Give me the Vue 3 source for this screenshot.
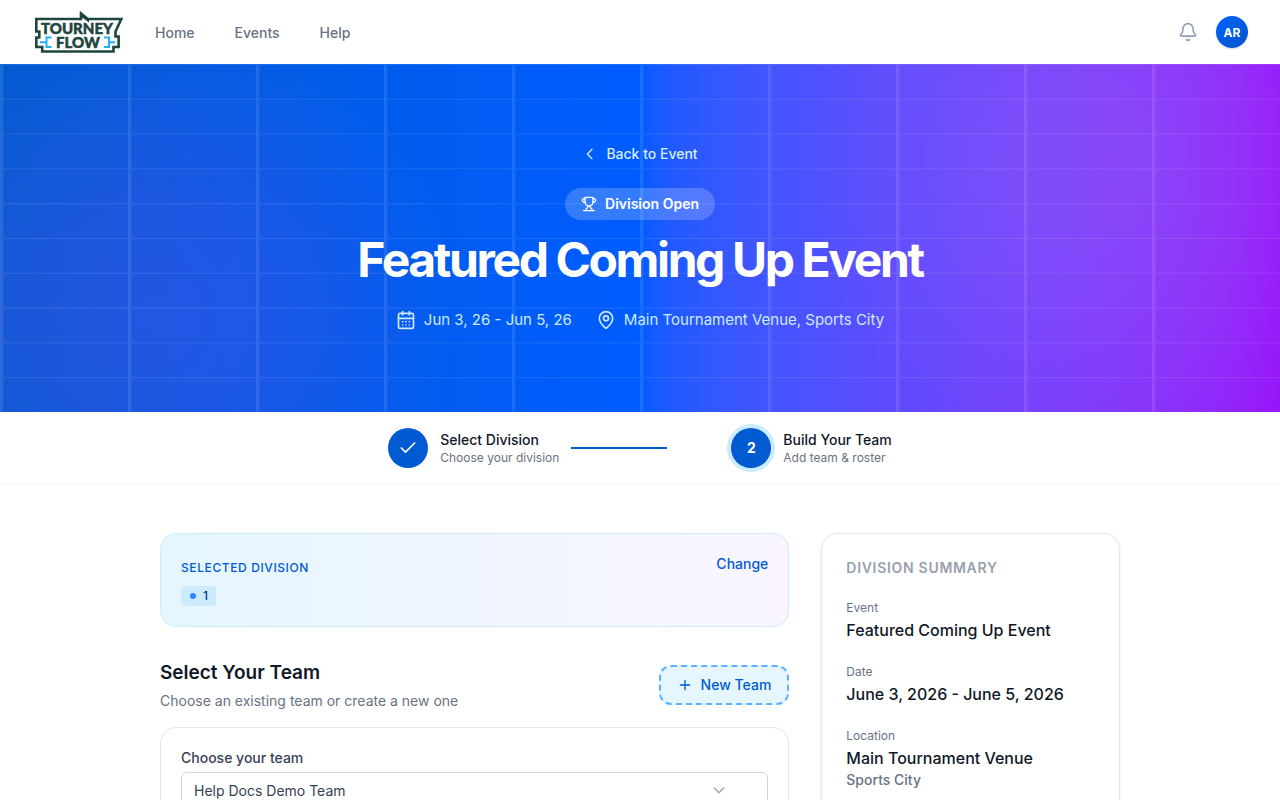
<template>
  <div class="page">
    <header class="topbar">
      <div class="topbar-left">
        <a href="#" class="logo" aria-label="Tourney Flow">
          <svg viewBox="34 10 91 44" width="91" height="44">
            <path
              class="logo-frame"
              d="M36.3 19H81V14L87.5 19H121.3L115.5 31.5V36.5H118.6V47H113.5V51.5H42.2V47H36.3V37.5H39.3V31.5H36.3Z"
            />
            <path class="logo-bolt" d="M80 11L89 18.5V22.5L80 16Z" />
            <path class="logo-bracket" d="M40 42.3H46.5M51.5 37.6H46.5V47H51.5" />
            <path class="logo-bracket" d="M115 42.3H109M104 37.6H109V47H104" />
            <text x="77" y="34" text-anchor="middle">TOURNEY</text>
            <text x="78" y="48" text-anchor="middle">FLOW</text>
          </svg>
        </a>
        <nav class="nav">
          <a v-for="link in links" :key="link" href="#">{{ link }}</a>
        </nav>
      </div>
      <div class="topbar-right">
        <button class="bell" type="button" aria-label="Notifications">
          <svg class="icon" viewBox="0 0 24 24" width="20" height="20">
            <path d="M10.268 21a2 2 0 0 0 3.464 0" />
            <path d="M3.262 15.326A1 1 0 0 0 4 17h16a1 1 0 0 0 .74-1.673C19.41 13.956 18 12.499 18 8A6 6 0 0 0 6 8c0 4.499-1.411 5.956-2.738 7.326" />
          </svg>
        </button>
        <button class="avatar" type="button">AR</button>
      </div>
    </header>

    <section class="hero">
      <svg class="hero-grid" viewBox="0 0 100 100" preserveAspectRatio="none" aria-hidden="true">
        <defs>
          <pattern id="grid" width="10" height="10" patternUnits="userSpaceOnUse">
            <path d="M 10 0 L 0 0 0 10" fill="none" stroke="white" stroke-width="0.5" />
          </pattern>
        </defs>
        <rect width="100" height="100" fill="url(#grid)" />
      </svg>
      <div class="hero-content">
        <a href="#" class="back-link">
          <svg class="icon" viewBox="0 0 24 24" width="16" height="16"><path d="m15 19-7-7 7-7" /></svg>
          Back to Event
        </a>
        <div class="hero-badge">
          <svg class="icon" viewBox="0 0 24 24" width="16" height="16">
            <path d="M6 9H4.5a2.5 2.5 0 0 1 0-5H6M18 9h1.5a2.5 2.5 0 0 0 0-5H18M4 22h16" />
            <path d="M10 14.66V17c0 .55-.47.98-.97 1.21C7.85 18.75 7 20.24 7 22" />
            <path d="M14 14.66V17c0 .55.47.98.97 1.21C16.15 18.75 17 20.24 17 22" />
            <path d="M18 2H6v7a6 6 0 0 0 12 0V2Z" />
          </svg>
          Division Open
        </div>
        <h1>{{ event.name }}</h1>
        <div class="hero-meta">
          <span>
            <svg class="icon" viewBox="0 0 24 24" width="20" height="20">
              <path d="M8 2v4M16 2v4M3 10h18" />
              <rect width="18" height="18" x="3" y="4" rx="2" />
              <path d="M8 14h.01M12 14h.01M16 14h.01M8 18h.01M12 18h.01M16 18h.01" />
            </svg>
            Jun 3, 26 - Jun 5, 26
          </span>
          <span>
            <svg class="icon" viewBox="0 0 24 24" width="20" height="20">
              <path d="M20 10c0 4.993-5.539 10.193-7.399 11.799a1 1 0 0 1-1.202 0C9.539 20.193 4 14.993 4 10a8 8 0 0 1 16 0" />
              <circle cx="12" cy="10" r="3" />
            </svg>
            {{ event.venue }}, {{ event.city }}
          </span>
        </div>
      </div>
    </section>

    <ol class="steps">
      <li class="step">
        <span class="step-circle">
          <svg class="icon" viewBox="0 0 24 24" width="20" height="20"><path d="M20 6 9 17l-5-5" /></svg>
        </span>
        <div>
          <p class="step-title">Select Division</p>
          <p class="step-text">Choose your division</p>
        </div>
        <span class="step-line"></span>
      </li>
      <li class="step">
        <span class="step-circle active">2</span>
        <div>
          <p class="step-title">Build Your Team</p>
          <p class="step-text">Add team &amp; roster</p>
        </div>
      </li>
    </ol>

    <main class="content">
      <div class="main-column">
        <section class="division-card">
          <div>
            <p class="division-label"><span>Selected Division</span></p>
            <span class="division-badge"><i class="dot"></i>1</span>
          </div>
          <button class="change-button" type="button">Change</button>
        </section>

        <div class="team-header">
          <div>
            <h2>Select Your Team</h2>
            <p>Choose an existing team or create a new one</p>
          </div>
          <button class="new-team" type="button">
            <svg class="icon" viewBox="0 0 24 24" width="16" height="16"><path d="M5 12h14M12 5v14" /></svg>
            New Team
          </button>
        </div>

        <section class="team-card">
          <label for="team">Choose your team</label>
          <div class="select-wrapper">
            <select id="team" v-model="team">
              <option v-for="name in teams" :key="name" :value="name">{{ name }}</option>
            </select>
            <svg class="icon select-arrow" viewBox="0 0 24 24" width="16" height="16"><path d="m5 9 7 7 7-7" /></svg>
          </div>
        </section>
      </div>

      <aside class="summary">
        <h3>Division Summary</h3>
        <dl>
          <div v-for="row in summary" :key="row.label">
            <dt>{{ row.label }}</dt>
            <dd>{{ row.value }}</dd>
            <dd v-if="row.note" class="note">{{ row.note }}</dd>
          </div>
        </dl>
      </aside>
    </main>
  </div>
</template>

<script setup>
import { ref } from 'vue'

const links = ['Home', 'Events', 'Help']

const event = {
  name: 'Featured Coming Up Event',
  venue: 'Main Tournament Venue',
  city: 'Sports City'
}

const summary = [
  { label: 'Event', value: event.name },
  { label: 'Date', value: 'June 3, 2026 - June 5, 2026' },
  { label: 'Location', value: event.venue, note: event.city }
]

const teams = ['Help Docs Demo Team']
const team = ref(teams[0])
</script>

<style>
body {
  background: #fff;
}
</style>

<style scoped>
.page {
  min-height: 100vh;
  font-family: Inter, 'Liberation Sans', sans-serif;
  font-size: 16px;
  line-height: 24px;
  color: #101828;
}

.page * {
  box-sizing: border-box;
}

h1, h2, h3, p, dl, dd, ol {
  margin: 0;
  padding: 0;
}

a {
  color: inherit;
  text-decoration: none;
}

button, select {
  font-family: inherit;
  cursor: pointer;
}

.icon {
  display: block;
  flex-shrink: 0;
  fill: none;
  stroke: currentColor;
  stroke-width: 2;
  stroke-linecap: round;
  stroke-linejoin: round;
}

.topbar {
  display: flex;
  justify-content: space-between;
  align-items: center;
  height: 64px;
  padding: 0 32px;
  background: white;
}

.topbar-left {
  display: flex;
  align-items: center;
  gap: 30px;
}

.logo {
  display: block;
  padding-left: 2px;
}

.logo svg {
  display: block;
}

.logo-frame {
  fill: white;
  stroke: #1f4540;
  stroke-width: 2.6;
}

.logo-bolt {
  fill: #1f4540;
}

.logo-bracket {
  fill: none;
  stroke: #1fb0ff;
  stroke-width: 2;
}

.logo text {
  font-family: Lato, sans-serif;
  font-weight: 900;
  font-size: 15px;
  fill: #1f4540;
  stroke: #1f4540;
  stroke-width: 0.5;
}

.nav {
  display: flex;
  gap: 40px;
  padding-top: 2px;
  font-size: 14px;
  font-weight: 500;
  line-height: 20px;
  color: #6a7282;
}

.topbar-right {
  display: flex;
  align-items: center;
  gap: 18px;
}

.bell {
  padding: 0;
  border: none;
  background: none;
  color: #90a1b9;
}

.avatar {
  width: 32px;
  height: 32px;
  padding: 0;
  border: none;
  border-radius: 50%;
  background: linear-gradient(135deg, #0062ff, #0056c8);
  box-shadow: 0 1px 2px rgba(0, 0, 0, 0.15);
  color: white;
  font-size: 12px;
  font-weight: 700;
}

.hero {
  position: relative;
  padding: 80px 32px;
  background:
    radial-gradient(circle 300px at 12% 72%, rgba(152, 70, 250, 0.22), rgba(152, 70, 250, 0.18) 40%, rgba(152, 70, 250, 0)),
    radial-gradient(circle 320px at 88% 28%, rgba(150, 130, 240, 0.26), rgba(150, 130, 240, 0.18) 40%, rgba(150, 130, 240, 0)),
    linear-gradient(to right in oklab, #005bd0, #005cff 50%, #9810fa);
}

.hero-grid {
  position: absolute;
  inset: 0;
  width: 100%;
  height: 100%;
  opacity: 0.1;
}

.hero-content {
  position: relative;
  display: flex;
  flex-direction: column;
  align-items: center;
  color: white;
}

.back-link {
  display: flex;
  align-items: center;
  gap: 8px;
  margin-bottom: 24px;
  color: #d4edff;
  font-size: 14px;
  font-weight: 500;
  line-height: 20px;
}

.hero-badge {
  display: flex;
  align-items: center;
  gap: 8px;
  margin-bottom: 16px;
  padding: 6px 16px;
  border-radius: 16px;
  background: rgba(255, 255, 255, 0.2);
  font-size: 14px;
  font-weight: 600;
  line-height: 20px;
}

h1 {
  margin-bottom: 24px;
  font-size: 48px;
  font-weight: 700;
  line-height: 48px;
  letter-spacing: -0.05em;
  text-align: center;
}

.hero-meta {
  display: flex;
  flex-wrap: wrap;
  justify-content: center;
  gap: 24px;
  color: #cceaff;
  font-size: 15px;
}

.hero-meta span {
  display: flex;
  align-items: center;
  gap: 8px;
}

.steps {
  display: flex;
  justify-content: center;
  gap: 64px;
  padding: 16px;
  border-bottom: 1px solid #f3f4f6;
  list-style: none;
}

.step {
  display: flex;
  align-items: center;
  gap: 12px;
}

.step-circle {
  display: flex;
  align-items: center;
  justify-content: center;
  width: 40px;
  height: 40px;
  border-radius: 50%;
  background: #005bd3;
  color: white;
  font-size: 14px;
  font-weight: 700;
}

.step-circle.active {
  box-shadow: 0 0 0 4px #ccebff;
}

.step-title {
  font-size: 14px;
  font-weight: 500;
  line-height: 20px;
}

.step-text {
  color: #6a7282;
  font-size: 12px;
  line-height: 16px;
}

.step-line {
  width: 96px;
  height: 2px;
  background: #005bd3;
}

.content {
  display: grid;
  grid-template-columns: repeat(3, minmax(0, 1fr));
  align-items: start;
  gap: 32px;
  max-width: 960px;
  margin: 0 auto;
  padding: 48px 0;
}

.main-column {
  grid-column: span 2;
}

.division-card {
  display: flex;
  justify-content: space-between;
  align-items: flex-start;
  margin-bottom: 32px;
  padding: 20px;
  border: 1px solid #ccebff;
  border-radius: 16px;
  background: linear-gradient(to right, #e5f6ff, #faf5ff);
}

.division-label {
  margin-bottom: 8px;
}

.division-label span {
  color: #005bd3;
  font-size: 12px;
  font-weight: 500;
  line-height: 16px;
  letter-spacing: 0.05em;
  text-transform: uppercase;
}

.division-badge {
  display: flex;
  align-items: center;
  gap: 6px;
  width: fit-content;
  padding: 2px 8px;
  border-radius: 4px;
  background: #ccebff;
  color: #00408f;
  font-size: 12px;
  font-weight: 500;
  line-height: 16px;
}

.dot {
  width: 6px;
  height: 6px;
  margin: 0 1px;
  border-radius: 50%;
  background: #2b85ff;
}

.change-button {
  padding: 0;
  border: none;
  background: none;
  color: #005bd3;
  font-size: 14px;
  font-weight: 500;
  line-height: 20px;
}

.team-header {
  display: flex;
  justify-content: space-between;
  align-items: center;
  margin-bottom: 16px;
}

.team-header h2 {
  margin-bottom: 4px;
  font-size: 19px;
  font-weight: 600;
  line-height: 28px;
}

.team-header p {
  color: #6a7282;
  font-size: 14px;
  line-height: 20px;
}

.new-team {
  display: flex;
  align-items: center;
  gap: 8px;
  padding: 8px 16px;
  border: 2px dashed #5eb1ff;
  border-radius: 12px;
  background: #e5f6ff;
  color: #005bd3;
  font-size: 14px;
  font-weight: 500;
  line-height: 20px;
}

.team-card {
  padding: 20px;
  border: 1px solid #e5e7eb;
  border-radius: 16px;
}

.team-card label {
  display: block;
  margin-bottom: 4px;
  color: #364153;
  font-size: 14px;
  font-weight: 500;
  line-height: 20px;
}

.select-wrapper {
  position: relative;
}

.select-wrapper select {
  display: block;
  width: 100%;
  height: 36px;
  padding: 0 64px 0 12px;
  border: 1px solid #d1d5dc;
  border-radius: 6px;
  appearance: none;
  background: white;
  color: #364153;
  font-size: 14px;
}

.select-arrow {
  position: absolute;
  top: 10px;
  right: 41px;
  color: #99a1af;
  pointer-events: none;
}

.summary {
  padding: 24px;
  border: 1px solid #e5e7eb;
  border-radius: 16px;
  box-shadow: 0 1px 3px rgba(0, 0, 0, 0.1);
}

.summary h3 {
  margin-bottom: 20px;
  color: #99a1af;
  font-size: 14px;
  font-weight: 600;
  line-height: 20px;
  letter-spacing: 0.05em;
  text-transform: uppercase;
}

.summary dl {
  display: flex;
  flex-direction: column;
  gap: 20px;
}

.summary dt {
  color: #6a7282;
  font-size: 12px;
  line-height: 20px;
}

.summary dd {
  font-weight: 500;
}

.summary .note {
  color: #6a7282;
  font-size: 14px;
  line-height: 20px;
}

@media (max-width: 1000px) {
  .content {
    margin: 0 24px;
  }
}

@media (max-width: 768px) {
  .content {
    grid-template-columns: minmax(0, 1fr);
  }

  .main-column {
    grid-column: auto;
  }

  .steps {
    gap: 24px;
  }

  .step-line {
    display: none;
  }
}
</style>
